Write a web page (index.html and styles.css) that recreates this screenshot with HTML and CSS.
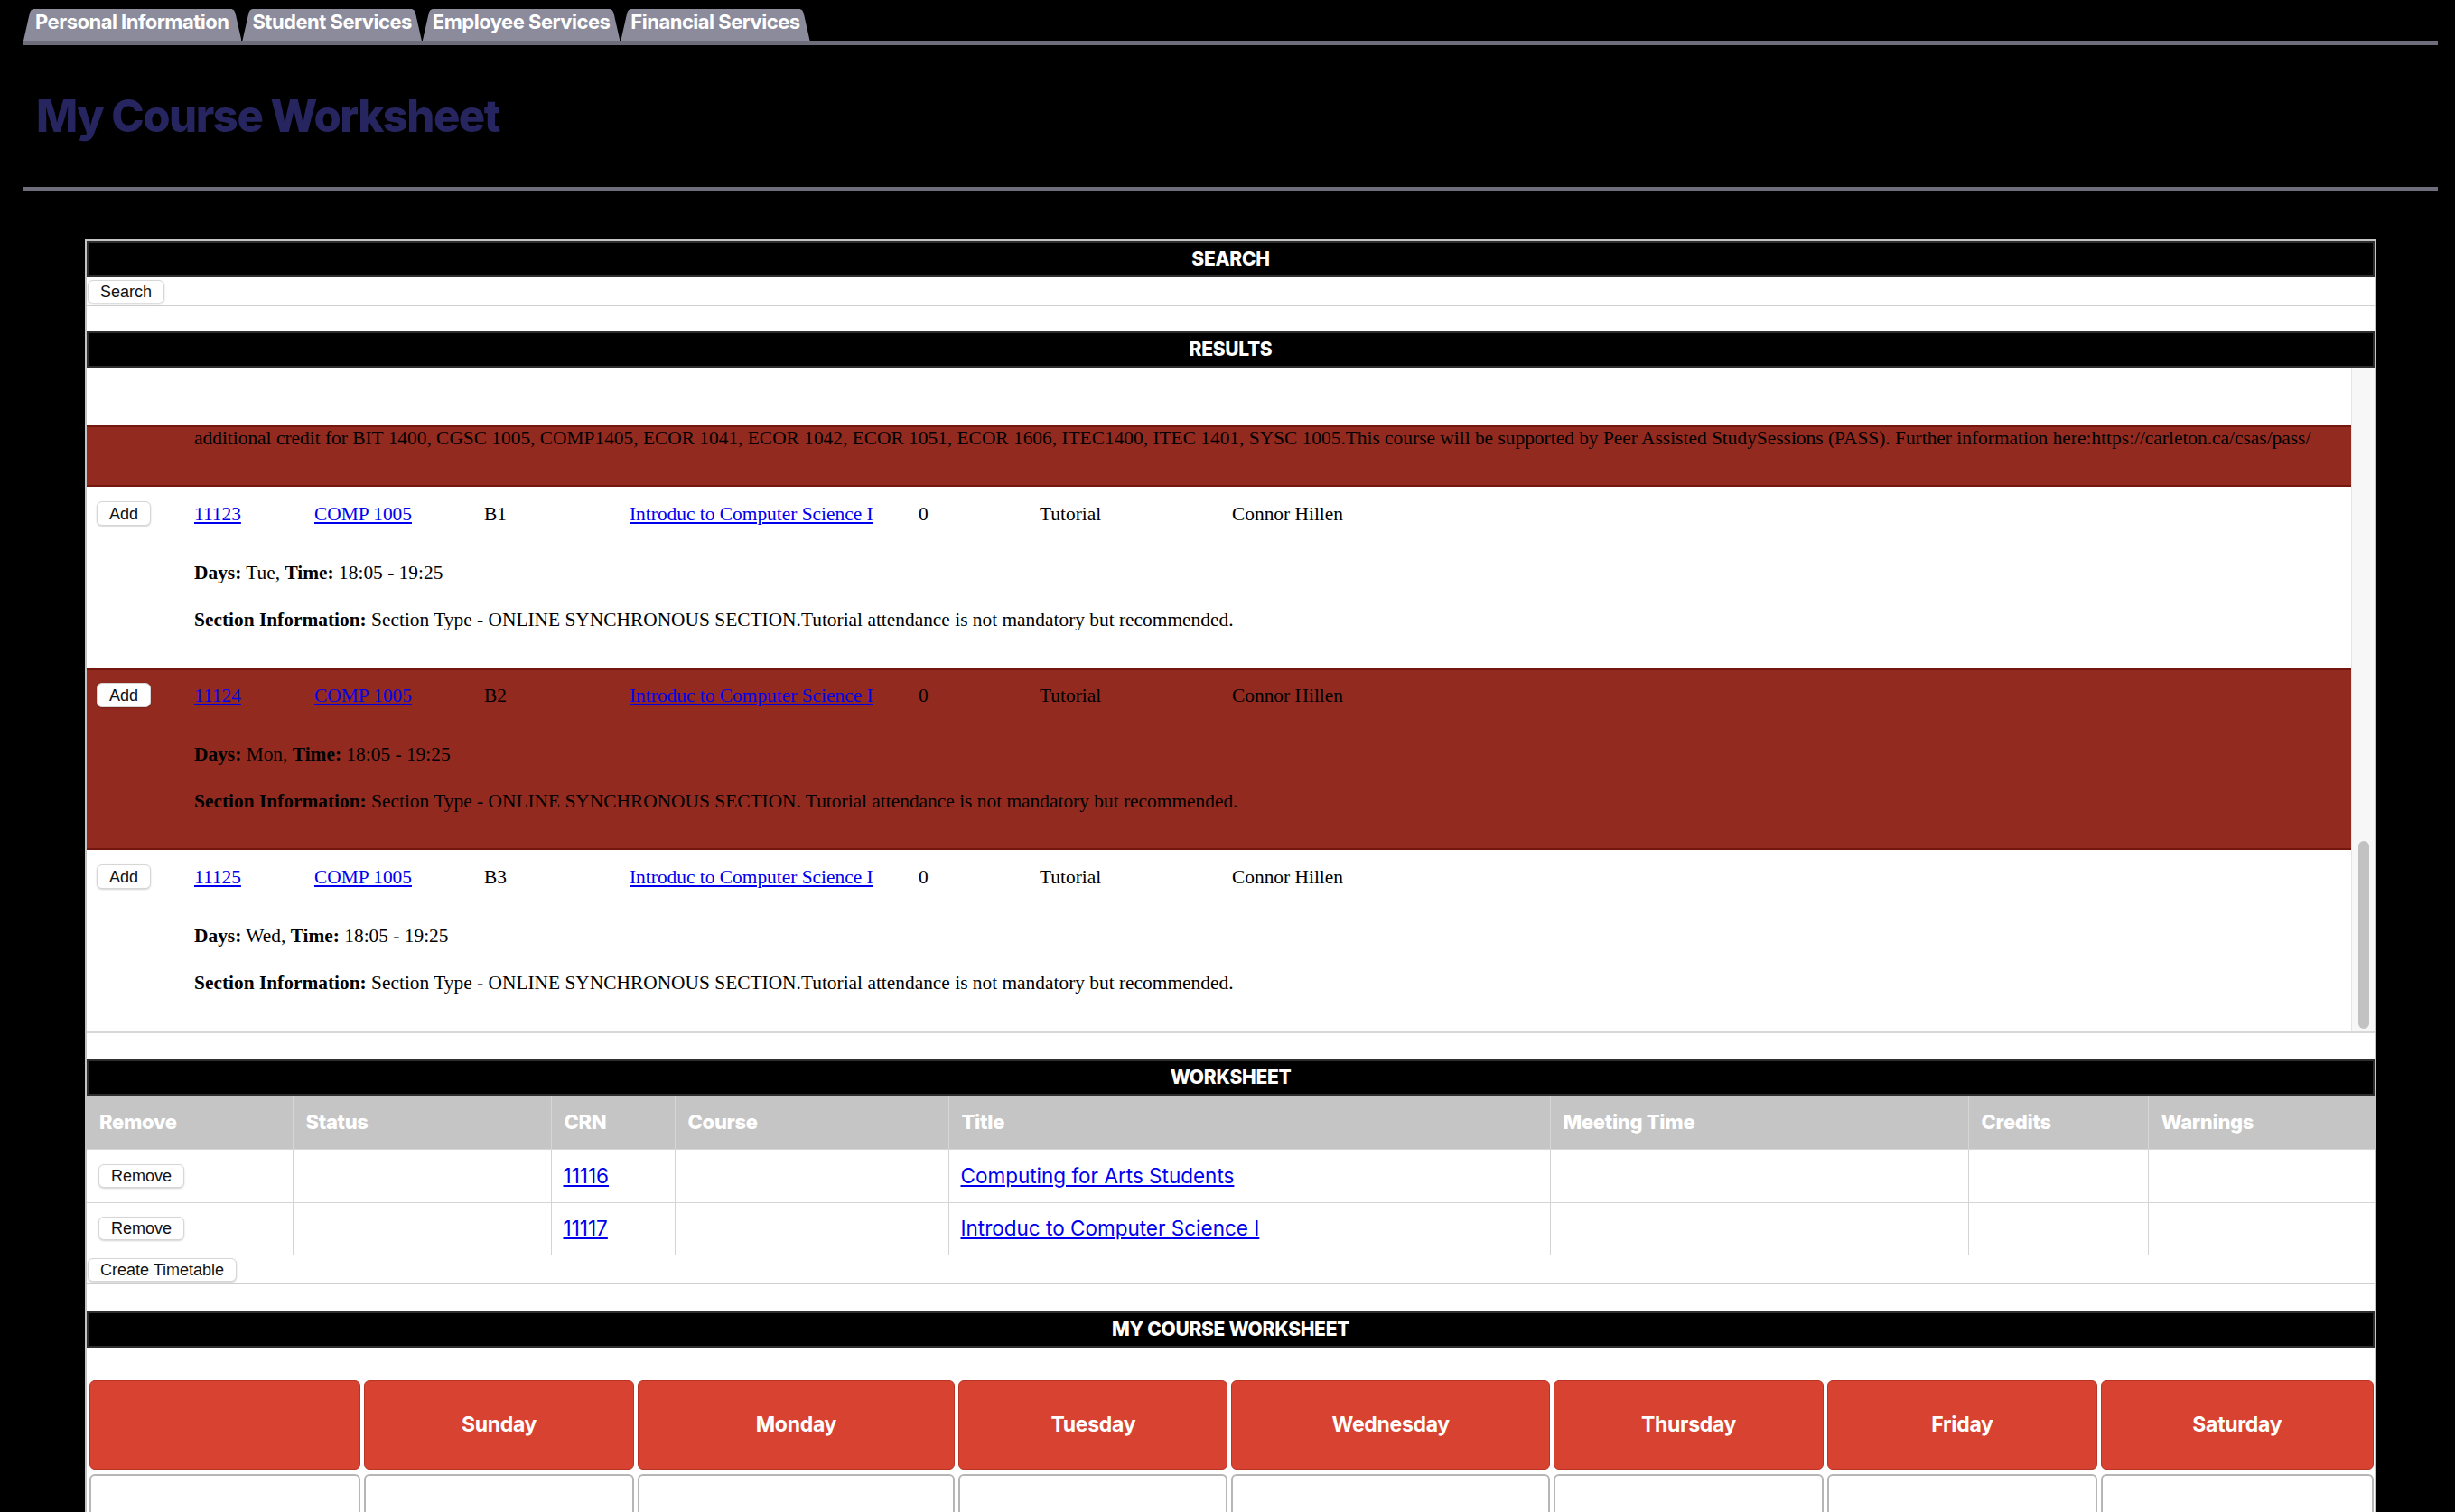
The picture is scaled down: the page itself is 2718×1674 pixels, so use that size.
FILE: index.html
```html
<!DOCTYPE html>
<html lang="en">
<head>
<meta charset="utf-8">
<title>My Course Worksheet</title>
<link rel="stylesheet" href="styles.css">
</head>
<body>
<nav class="tabs">
  <a class="tab">Personal Information</a>
  <a class="tab">Student Services</a>
  <a class="tab">Employee Services</a>
  <a class="tab">Financial Services</a>
</nav>
<div class="tabbar"></div>
<h1 class="page-title">My Course Worksheet</h1>
<div class="rule"></div>

<main class="panel">
  <h2 class="bar">SEARCH</h2>
  <div class="btn-row"><button class="btn">Search</button></div>

  <h2 class="bar gap-top">RESULTS</h2>
  <div class="results">
    <div class="results-list">
      <div class="spacer"></div>
      <div class="tail hl">
        <p class="info">additional credit for BIT 1400, CGSC 1005, COMP1405, ECOR 1041, ECOR 1042, ECOR 1051, ECOR 1606, ITEC1400, ITEC 1401, SYSC 1005.This course will be supported by Peer Assisted StudySessions (PASS). Further information here:https://carleton.ca/csas/pass/</p>
      </div>
      <div class="result">
        <div class="line">
          <span class="c-add"><button class="btn">Add</button></span>
          <a class="link" href="#">11123</a>
          <a class="link" href="#">COMP 1005</a>
          <span>B1</span>
          <a class="link" href="#">Introduc to Computer Science I</a>
          <span>0</span>
          <span>Tutorial</span>
          <span>Connor Hillen</span>
        </div>
        <p class="info days"><b>Days:</b> Tue, <b>Time:</b> 18:05 - 19:25</p>
        <p class="info sect"><b>Section Information:</b> Section Type - ONLINE SYNCHRONOUS SECTION.Tutorial attendance is not mandatory but recommended.</p>
      </div>
      <div class="result hl">
        <div class="line">
          <span class="c-add"><button class="btn">Add</button></span>
          <a class="link" href="#">11124</a>
          <a class="link" href="#">COMP 1005</a>
          <span>B2</span>
          <a class="link" href="#">Introduc to Computer Science I</a>
          <span>0</span>
          <span>Tutorial</span>
          <span>Connor Hillen</span>
        </div>
        <p class="info days"><b>Days:</b> Mon, <b>Time:</b> 18:05 - 19:25</p>
        <p class="info sect"><b>Section Information:</b> Section Type - ONLINE SYNCHRONOUS SECTION. Tutorial attendance is not mandatory but recommended.</p>
      </div>
      <div class="result">
        <div class="line">
          <span class="c-add"><button class="btn">Add</button></span>
          <a class="link" href="#">11125</a>
          <a class="link" href="#">COMP 1005</a>
          <span>B3</span>
          <a class="link" href="#">Introduc to Computer Science I</a>
          <span>0</span>
          <span>Tutorial</span>
          <span>Connor Hillen</span>
        </div>
        <p class="info days"><b>Days:</b> Wed, <b>Time:</b> 18:05 - 19:25</p>
        <p class="info sect"><b>Section Information:</b> Section Type - ONLINE SYNCHRONOUS SECTION.Tutorial attendance is not mandatory but recommended.</p>
      </div>
    </div>
    <div class="scrolltrack"><div class="thumb"></div></div>
  </div>

  <h2 class="bar gap-top2">WORKSHEET</h2>
  <table class="ws">
    <colgroup>
      <col class="w-remove"><col class="w-status"><col class="w-crn"><col class="w-course">
      <col class="w-title"><col class="w-time"><col class="w-credits"><col class="w-warn">
    </colgroup>
    <thead>
      <tr><th>Remove</th><th>Status</th><th>CRN</th><th>Course</th><th>Title</th><th>Meeting Time</th><th>Credits</th><th>Warnings</th></tr>
    </thead>
    <tbody>
      <tr><td><button class="btn">Remove</button></td><td></td><td><a class="wlink" href="#">11116</a></td><td></td><td><a class="wlink" href="#">Computing for Arts Students</a></td><td></td><td></td><td></td></tr>
      <tr class="r2"><td><button class="btn">Remove</button></td><td></td><td><a class="wlink" href="#">11117</a></td><td></td><td><a class="wlink" href="#">Introduc to Computer Science I</a></td><td></td><td></td><td></td></tr>
    </tbody>
  </table>
  <div class="btn-row"><button class="btn">Create Timetable</button></div>

  <h2 class="bar gap-top3">MY COURSE WORKSHEET</h2>
  <div class="calendar">
    <div class="day"></div>
    <div class="day">Sunday</div>
    <div class="day">Monday</div>
    <div class="day">Tuesday</div>
    <div class="day">Wednesday</div>
    <div class="day">Thursday</div>
    <div class="day">Friday</div>
    <div class="day">Saturday</div>
    <div class="slot"></div><div class="slot"></div><div class="slot"></div><div class="slot"></div>
    <div class="slot"></div><div class="slot"></div><div class="slot"></div><div class="slot"></div>
  </div>
</main>
</body>
</html>
```

FILE: styles.css
```css
* { box-sizing: border-box; }

html, body {
  background: #000;
}

body {
  margin: 0;
  padding: 10px 19px 0 26px;
  font-family: "Inter", "Noto Sans", sans-serif;
  color: #000;
}

/* ---------- Tabs ---------- */
.tabs {
  display: flex;
  gap: 1px;
  height: 35px;
}

.tab {
  display: block;
  height: 35px;
  padding: 0 11px 6px;
  line-height: 29px;
  background: #8b8b9b;
  color: #fff;
  font-weight: 700;
  font-size: 22px;
  letter-spacing: -0.5px;
  white-space: nowrap;
  clip-path: polygon(7px 4px, 8.5px 1.3px, 11px 0, calc(100% - 11px) 0, calc(100% - 8.5px) 1.3px, calc(100% - 7px) 4px, 100% 100%, 0 100%);
}

.tab:first-child { padding: 0 14px 6px 13px; }

.tabbar {
  height: 5px;
  background: #6d6d7b;
}

.page-title {
  margin: 49px 0 48px 14px;
  font-size: 49px;
  line-height: 60px;
  font-weight: 800;
  letter-spacing: -1.5px;
  color: #27255f;
}

.rule {
  height: 5px;
  background: #6d6d7b;
}

/* ---------- Panel ---------- */
.panel {
  margin: 53px 68px 0 68px;
  background: #fff;
  border: 2px solid #c4c4c4;
}

.bar {
  margin: 0;
  height: 40px;
  border: 2px solid #2e2e2e;
  background: #000;
  color: #fff;
  text-align: center;
  font-size: 21px;
  font-weight: 800;
  line-height: 36px;
  letter-spacing: -0.3px;
}

.gap-top { margin-top: 28px; }
.gap-top2 { margin-top: 29px; }
.gap-top3 { margin-top: 30px; }

.btn-row {
  padding: 3px 1px 2px;
  border-bottom: 1px solid #cfcfcf;
  line-height: 0;
}

.btn {
  font-family: "Liberation Sans", Arial, sans-serif;
  font-size: 18px;
  height: 26px;
  line-height: 24px;
  padding: 0 13px;
  color: #111;
  background: #fff;
  border: 1px solid #d6d6d6;
  border-radius: 6px;
  box-shadow: 0 1px 2px rgba(0, 0, 0, 0.18);
}

/* ---------- Results ---------- */
.results {
  display: flex;
  height: 737px;
  border-bottom: 2px solid #d8d8d8;
  overflow: hidden;
}

.results-list {
  flex: 1;
  font-family: "Liberation Serif", "Times New Roman", serif;
  font-size: 21.4px;
  line-height: 24px;
}

.spacer { height: 64px; }

.hl {
  background: #932a1f;
  border-top: 2px solid #74180f !important;
  border-bottom: 2px solid #74180f !important;
}

.tail {
  height: 68px;
}

.info {
  margin: 0;
  padding-left: 119px;
  white-space: nowrap;
}

.result {
  height: 201px;
  padding-top: 14px;
  border-top: 2px solid transparent;
  border-bottom: 2px solid transparent;
}

.line {
  display: grid;
  grid-template-columns: 119px 133px 188px 161px 320px 134px 213px 1fr;
  align-items: center;
  height: 27px;
}

.c-add { padding-left: 11px; line-height: 0; }
.c-add .btn { height: 27px; }

.link { color: #0000ee; text-decoration: underline; }

.days { margin-top: 40px; }
.sect { margin-top: 28px; }

.scrolltrack {
  width: 26px;
  background: #f7f7f7;
  border-left: 1px solid #e4e4e4;
  display: flex;
  flex-direction: column;
  justify-content: flex-end;
  padding: 0 6px 3px 7px;
}

.thumb {
  height: 208px;
  border-radius: 7px;
  background: #c2c2c2;
}

/* ---------- Worksheet table ---------- */
.ws {
  width: 100%;
  border-collapse: collapse;
  table-layout: fixed;
}

.w-remove { width: 228px; }
.w-status { width: 286px; }
.w-crn { width: 137px; }
.w-course { width: 303px; }
.w-title { width: 666px; }
.w-time { width: 463px; }
.w-credits { width: 199px; }
.w-warn { width: auto; }

.ws th {
  height: 59px;
  background: #c5c5c5;
  color: #fff;
  text-align: left;
  font-size: 22px;
  font-weight: 800;
  letter-spacing: -0.3px;
  padding: 0 14px;
  border: 1px solid #d6d6d6;
  border-top: none;
}

.ws td {
  height: 59px;
  padding: 0 13px;
  border: 1px solid #d4d4d4;
  vertical-align: middle;
  line-height: 0;
}

.ws tr.r2 td { height: 58px; }

.ws td:first-child, .ws th:first-child { border-left: none; }
.ws td:last-child, .ws th:last-child { border-right: none; }

.wlink {
  color: #0000ee;
  font-size: 22.5px;
  line-height: 24px;
  text-decoration: underline;
}

/* ---------- Calendar ---------- */
.calendar {
  display: grid;
  grid-template-columns: 300fr 298fr 351fr 298fr 352fr 299fr 298fr 302fr;
  column-gap: 4px;
  row-gap: 5px;
  padding: 36px 1px 0 3px;
}

.day {
  height: 99px;
  background: #d84230;
  border: 1px solid #b93424;
  border-radius: 6px;
  color: #fff;
  font-size: 23px;
  font-weight: 700;
  letter-spacing: -0.3px;
  display: flex;
  align-items: center;
  justify-content: center;
}

.slot {
  height: 100px;
  background: #fff;
  border: 2px solid #b6b6b6;
  border-radius: 6px;
}
```
